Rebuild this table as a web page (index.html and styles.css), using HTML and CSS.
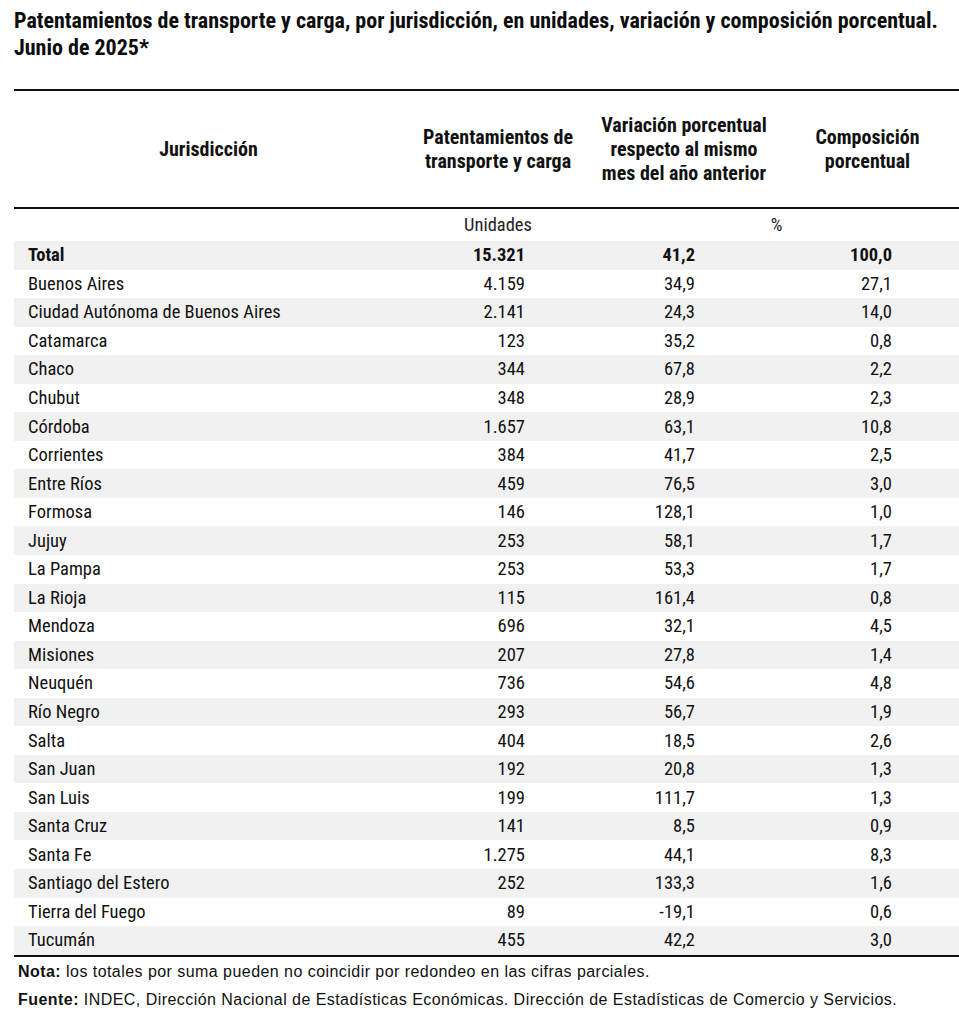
FILE: index.html
```html
<!DOCTYPE html>
<html lang="es">
<head>
<meta charset="utf-8">
<link rel="stylesheet" href="styles.css">
</head>
<body>
<div class="page">
  <h1 class="title">Patentamientos de transporte y carga, por jurisdicción, en unidades, variación y composición porcentual.<br>Junio de 2025*</h1>
  <table class="data">
    <colgroup>
      <col class="c1"><col class="c2"><col class="c3"><col class="c4">
    </colgroup>
    <thead>
      <tr class="head">
        <th>Jurisdicción</th>
        <th>Patentamientos de<br>transporte y carga</th>
        <th>Variación porcentual<br>respecto al mismo<br>mes del año anterior</th>
        <th>Composición<br>porcentual</th>
      </tr>
    </thead>
    <tbody>
      <tr class="units"><td></td><td>Unidades</td><td colspan="2">%</td></tr>
      <tr class="total"><td>Total</td><td>15.321</td><td>41,2</td><td>100,0</td></tr>
      <tr><td>Buenos Aires</td><td>4.159</td><td>34,9</td><td>27,1</td></tr>
      <tr><td>Ciudad Autónoma de Buenos Aires</td><td>2.141</td><td>24,3</td><td>14,0</td></tr>
      <tr><td>Catamarca</td><td>123</td><td>35,2</td><td>0,8</td></tr>
      <tr><td>Chaco</td><td>344</td><td>67,8</td><td>2,2</td></tr>
      <tr><td>Chubut</td><td>348</td><td>28,9</td><td>2,3</td></tr>
      <tr><td>Córdoba</td><td>1.657</td><td>63,1</td><td>10,8</td></tr>
      <tr><td>Corrientes</td><td>384</td><td>41,7</td><td>2,5</td></tr>
      <tr><td>Entre Ríos</td><td>459</td><td>76,5</td><td>3,0</td></tr>
      <tr><td>Formosa</td><td>146</td><td>128,1</td><td>1,0</td></tr>
      <tr><td>Jujuy</td><td>253</td><td>58,1</td><td>1,7</td></tr>
      <tr><td>La Pampa</td><td>253</td><td>53,3</td><td>1,7</td></tr>
      <tr><td>La Rioja</td><td>115</td><td>161,4</td><td>0,8</td></tr>
      <tr><td>Mendoza</td><td>696</td><td>32,1</td><td>4,5</td></tr>
      <tr><td>Misiones</td><td>207</td><td>27,8</td><td>1,4</td></tr>
      <tr><td>Neuquén</td><td>736</td><td>54,6</td><td>4,8</td></tr>
      <tr><td>Río Negro</td><td>293</td><td>56,7</td><td>1,9</td></tr>
      <tr><td>Salta</td><td>404</td><td>18,5</td><td>2,6</td></tr>
      <tr><td>San Juan</td><td>192</td><td>20,8</td><td>1,3</td></tr>
      <tr><td>San Luis</td><td>199</td><td>111,7</td><td>1,3</td></tr>
      <tr><td>Santa Cruz</td><td>141</td><td>8,5</td><td>0,9</td></tr>
      <tr><td>Santa Fe</td><td>1.275</td><td>44,1</td><td>8,3</td></tr>
      <tr><td>Santiago del Estero</td><td>252</td><td>133,3</td><td>1,6</td></tr>
      <tr><td>Tierra del Fuego</td><td>89</td><td>-19,1</td><td>0,6</td></tr>
      <tr><td>Tucumán</td><td>455</td><td>42,2</td><td>3,0</td></tr>
    </tbody>
  </table>
  <p class="note"><b>Nota:</b> los totales por suma pueden no coincidir por redondeo en las cifras parciales.</p>
  <p class="note"><b>Fuente:</b> INDEC, Dirección Nacional de Estadísticas Económicas. Dirección de Estadísticas de Comercio y Servicios.</p>
</div>
</body>
</html>
```

FILE: styles.css
```css
html, body {
  margin: 0;
  padding: 0;
  background: #ffffff;
}

body {
  font-family: "Liberation Sans Narrow", "Roboto Condensed", "DejaVu Sans Condensed", "Liberation Sans", sans-serif;
  color: #111111;
  overflow: hidden;
}

.page {
  padding: 7px 0 0 14px;
}

.title {
  margin: 0;
  font-size: 22px;
  font-weight: 700;
  line-height: 27px;
  white-space: nowrap;
  color: #0c0c0c;
}

.data {
  margin-top: 28px;
  width: 946px;
  border-collapse: collapse;
  table-layout: fixed;
  font-size: 18.5px;
}

.c1 { width: 389px; }
.c2 { width: 190px; }
.c3 { width: 182px; }
.c4 { width: 185px; }

.head th {
  border-top: 2px solid #111;
  border-bottom: 2px solid #111;
  height: 116px;
  padding: 0;
  font-size: 20px;
  font-weight: 700;
  line-height: 24px;
  text-align: center;
  vertical-align: middle;
  white-space: nowrap;
}

.data td {
  height: 28.55px;
  padding: 0;
  line-height: 20px;
  vertical-align: middle;
  text-align: right;
  white-space: nowrap;
}

.data td:first-child {
  text-align: left;
  padding-left: 14px;
}

.data td:nth-child(2) { padding-right: 68px; }
.data td:nth-child(3) { padding-right: 80px; }
.data td:nth-child(4) { padding-right: 68px; }

.data tr.units td {
  height: 32px;
  text-align: center;
  padding: 0;
  color: #222;
}

.data tbody tr:nth-child(even) {
  background: #f1f1f1;
}

.data tr.total td {
  font-weight: 700;
}

.data tbody tr:last-child td {
  border-bottom: 2px solid #111;
}

.note {
  margin: 5px 0 0 4px;
  font-family: "Liberation Sans", Arial, sans-serif;
  font-size: 16px;
  letter-spacing: 0.45px;
  line-height: 19px;
  white-space: nowrap;
}

.note + .note {
  margin-top: 9px;
}
```
